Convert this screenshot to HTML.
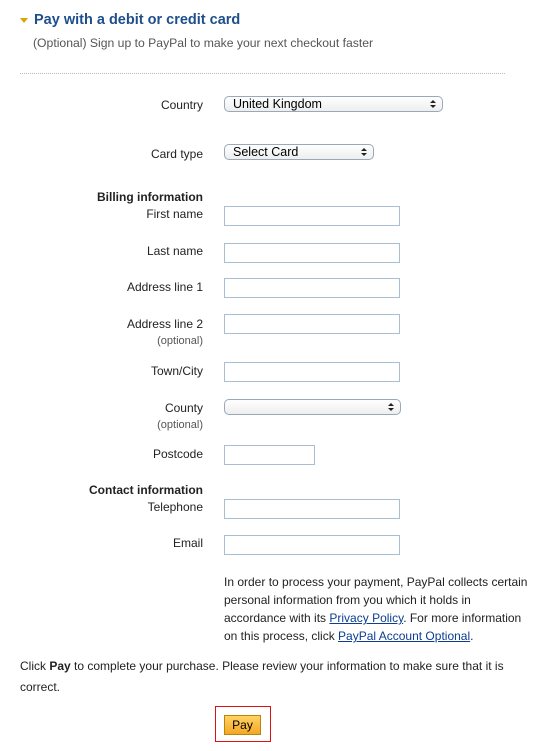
<!DOCTYPE html>
<html><head><meta charset="utf-8"><style>
body{margin:0;width:550px;height:751px;background:#fff;font-family:"Liberation Sans",Arial,sans-serif;color:#222;position:relative;overflow:hidden}
.a{position:absolute;font-size:12px;line-height:14px;white-space:nowrap}
.l{position:absolute;right:347px;font-size:12px;line-height:14px;text-align:right;white-space:nowrap}
.o{position:absolute;right:347px;font-size:11px;line-height:12px;color:#555}
.i{position:absolute;left:224px;width:174px;height:18px;border:1px solid #a9bdd3;background:#fff}
.s{position:absolute;left:224px;height:14px;border:1px solid #9aa8b8;border-radius:5px;background:linear-gradient(#fff,#eee);font-size:12.5px;line-height:14px;padding-left:8px;box-sizing:content-box;color:#000}
.s:after{content:"";position:absolute;right:6px;top:3px;width:0;height:0;border-left:3px solid transparent;border-right:3px solid transparent;border-bottom:3px solid #222}
.s:before{content:"";position:absolute;right:6px;top:8px;width:0;height:0;border-left:3px solid transparent;border-right:3px solid transparent;border-top:3px solid #222}
a{color:#0b3d91;text-decoration:underline}
</style></head><body>
<div style="position:absolute;left:20px;top:18px;width:0;height:0;border-left:4px solid transparent;border-right:4px solid transparent;border-top:5px solid #d9a400"></div>
<div class="a" style="left:34px;top:12px;font-size:14.5px;line-height:17px;font-weight:bold;color:#1d4f8c">Pay with a debit or credit card</div>
<div class="a" style="left:33px;top:36px;color:#555;font-size:12.2px">(Optional) Sign up to PayPal to make your next checkout faster</div>
<div style="position:absolute;left:20px;top:73px;width:485px;border-top:1px dotted #bbb"></div>

<div class="l" style="top:98px">Country</div>
<div class="s" style="top:96px;width:209px">United Kingdom</div>
<div class="l" style="top:147px">Card type</div>
<div class="s" style="top:144px;width:140px">Select Card</div>

<div class="l" style="top:190px;font-weight:bold">Billing information</div>
<div class="l" style="top:207px">First name</div><div class="i" style="top:206px"></div>
<div class="l" style="top:244px">Last name</div><div class="i" style="top:243px"></div>
<div class="l" style="top:280px">Address line 1</div><div class="i" style="top:278px"></div>
<div class="l" style="top:317px">Address line 2</div><div class="i" style="top:314px"></div>
<div class="o" style="top:335px">(optional)</div>
<div class="l" style="top:364px">Town/City</div><div class="i" style="top:362px"></div>
<div class="l" style="top:401px">County</div>
<div class="s" style="top:399px;width:167px"></div>
<div class="o" style="top:419px">(optional)</div>
<div class="l" style="top:447px">Postcode</div><div class="i" style="top:445px;width:89px"></div>
<div class="l" style="top:483px;font-weight:bold">Contact information</div>
<div class="l" style="top:500px">Telephone</div><div class="i" style="top:499px"></div>
<div class="l" style="top:536px">Email</div><div class="i" style="top:535px"></div>

<div class="a" style="left:224px;top:573px;line-height:18px;white-space:normal;width:312px">In order to process your payment, PayPal collects certain personal information from you which it holds in accordance with its <a>Privacy Policy</a>. For more information on this process, click <a>PayPal Account Optional</a>.</div>
<div class="a" style="left:20px;top:656px;line-height:21px;white-space:normal;width:510px">Click <b>Pay</b> to complete your purchase. Please review your information to make sure that it is correct.</div>

<div style="position:absolute;left:215px;top:706px;width:54px;height:34px;border:1px solid #d11"></div>
<div style="position:absolute;left:224px;top:715px;width:35px;height:18px;border:1px solid #b8860b;background:linear-gradient(#ffd366,#f5a623);font-size:12px;line-height:18px;text-align:center;color:#000">Pay</div>
</body></html>
